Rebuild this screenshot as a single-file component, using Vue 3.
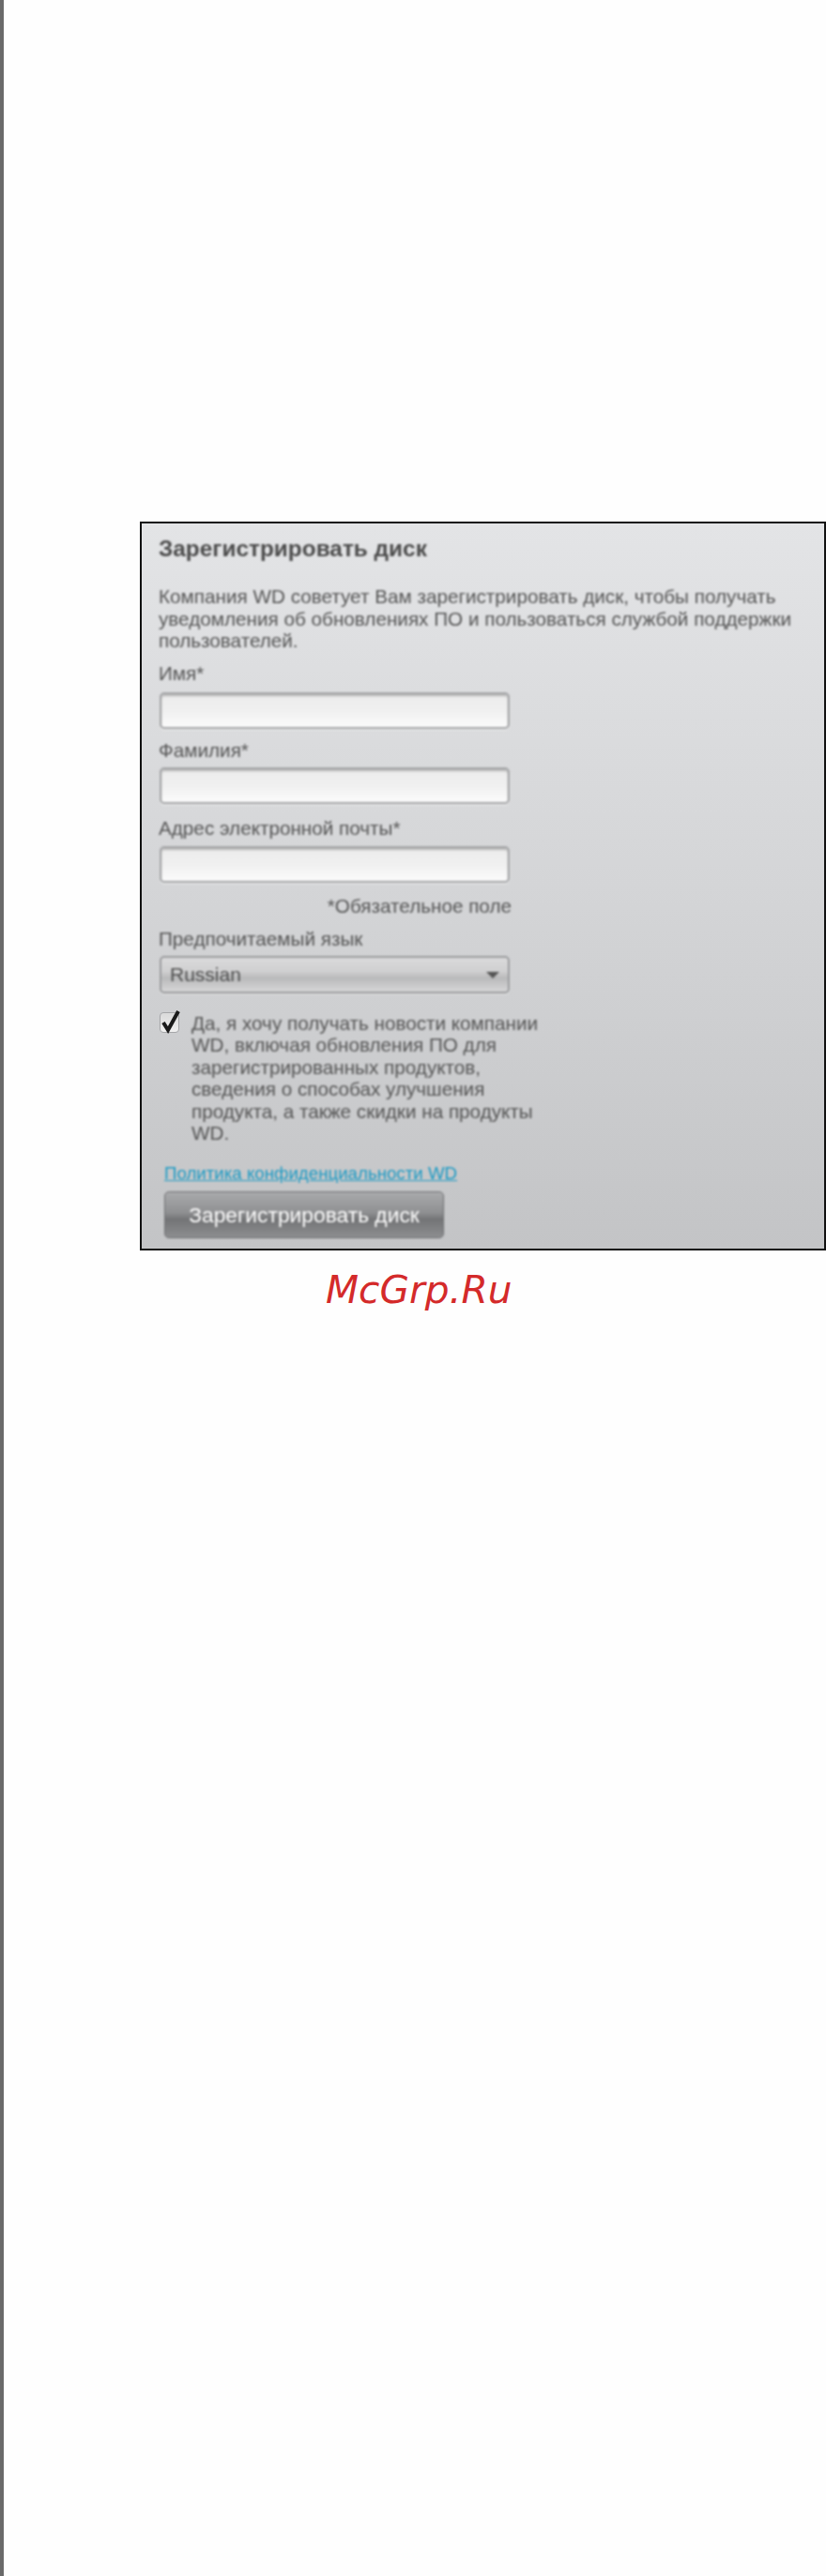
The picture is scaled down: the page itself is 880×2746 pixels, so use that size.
<script setup>
import { ref } from 'vue'

const firstName = ref('')
const lastName = ref('')
const email = ref('')
const language = ref('Russian')
const subscribe = ref(true)
</script>

<template>
  <div class="page">
    <form class="panel" @submit.prevent>
      <h2 class="title">Зарегистрировать диск</h2>
      <p class="intro">
        Компания WD советует Вам зарегистрировать диск, чтобы получать<br />
        уведомления об обновлениях ПО и пользоваться службой поддержки<br />
        пользователей.
      </p>

      <label class="label first">Имя*</label>
      <input v-model="firstName" class="input" type="text" />

      <label class="label second">Фамилия*</label>
      <input v-model="lastName" class="input tight" type="text" />

      <label class="label third">Адрес электронной почты*</label>
      <input v-model="email" class="input" type="text" />

      <div class="required">*Обязательное поле</div>

      <label class="label lang">Предпочитаемый язык</label>
      <div class="select-wrap">
        <select v-model="language" class="select">
          <option>Russian</option>
        </select>
        <span class="arrow"></span>
      </div>

      <label class="check-row">
        <span class="check-box" @click.prevent="subscribe = !subscribe">
          <svg v-if="subscribe" class="tick" viewBox="0 0 24 28" width="24" height="28">
            <path d="M4 15 L9 23 L20 3" fill="none" stroke="#1a1a1a" stroke-width="4" />
          </svg>
        </span>
        <span class="check-text">
          Да, я хочу получать новости компании<br />
          WD, включая обновления ПО для<br />
          зарегистрированных продуктов,<br />
          сведения о способах улучшения<br />
          продукта, а также скидки на продукты<br />
          WD.
        </span>
      </label>

      <a class="policy" href="#">Политика конфиденциальности WD</a>
      <button class="submit" type="submit">Зарегистрировать диск</button>
    </form>

    <div class="mark">McGrp.Ru</div>
  </div>
</template>

<style>
html, body {
  margin: 0;
  background: #fefefe;
}
</style>

<style scoped>
.page {
  box-sizing: border-box;
  width: 880px;
  height: 2746px;
  border-left: 4px solid #6a6a6a;
  padding: 556px 0 0 145px;
  font-family: "Liberation Sans", Arial, sans-serif;
  background: #fefefe;
}

.panel {
  box-sizing: border-box;
  width: 731px;
  height: 777px;
  border: 2px solid #111;
  padding: 15px 18px 0 18px;
  background: linear-gradient(180deg, #e3e4e6 0%, #d4d5d7 50%, #c3c4c6 100%);
  color: #555;
  display: flex;
  flex-direction: column;
  align-items: flex-start;
}

.title, .intro, .label, .required, .check-text, .policy, .submit, .select {
  filter: blur(1.2px);
}

.title {
  margin: 0;
  font-size: 24.4px;
  line-height: 24px;
  font-weight: bold;
  color: #4c4c4c;
}

.intro {
  margin: 27px 0 0;
  font-size: 20.7px;
  line-height: 23.5px;
  white-space: nowrap;
}

.label {
  display: block;
  font-size: 20.7px;
  line-height: 20px;
}
.label.first { margin-top: 13px; }
.label.second { margin-top: 13px; }
.label.third { margin-top: 16px; }
.label.lang { margin-top: 15px; }

.input {
  box-sizing: border-box;
  width: 373px;
  height: 39px;
  margin: 10px 0 0 1px;
  border: 2px solid #a2a3a5;
  border-radius: 5px;
  background: linear-gradient(180deg, #ececec 0%, #f0f0f0 50%, #fbfbfb 100%);
  box-shadow: 0 1px 2px #eeeeee, inset 0 2px 2px #b5b5b5;
  outline: none;
  filter: blur(1.2px);
}
.input.tight { margin-top: 8px; }
.label.third + .input { margin-top: 9px; }

.required {
  align-self: flex-start;
  width: 376px;
  margin-top: 15px;
  text-align: right;
  font-size: 20.7px;
  line-height: 20px;
}

.select-wrap {
  position: relative;
  width: 373px;
  height: 40px;
  margin: 8px 0 0 1px;
}

.select {
  appearance: none;
  box-sizing: border-box;
  width: 100%;
  height: 100%;
  padding: 0 0 0 9px;
  border: 2px solid #9a9b9d;
  border-radius: 5px;
  background: linear-gradient(180deg, #dadadb 0%, #d0d0d1 40%, #b9babb 60%, #d6d6d7 100%);
  box-shadow: 0 1px 2px #e4e4e4;
  color: #4e4e4e;
  font-family: inherit;
  font-size: 21px;
  outline: none;
}

.arrow {
  position: absolute;
  right: 11px;
  top: 17px;
  width: 0;
  height: 0;
  border-left: 7px solid transparent;
  border-right: 7px solid transparent;
  border-top: 7px solid #555;
  filter: blur(0.8px);
}

.check-row {
  display: flex;
  align-items: flex-start;
  gap: 13px;
  margin: 20px 0 0 1px;
}

.check-box {
  position: relative;
  flex: none;
  box-sizing: border-box;
  width: 21px;
  height: 22px;
  border: 1px solid #a5a6a8;
  border-radius: 4px;
  background: linear-gradient(180deg, #dadada, #f0f0f0);
  filter: blur(0.7px);
}

.tick {
  position: absolute;
  left: -1px;
  top: -5px;
}

.check-text {
  font-size: 20.7px;
  line-height: 23.6px;
  white-space: nowrap;
}

.policy {
  margin: 19px 0 0 6px;
  font-size: 18.7px;
  line-height: 24px;
  color: #1b9ac4;
  text-decoration: underline;
}

.submit {
  box-sizing: border-box;
  width: 298px;
  height: 50px;
  margin: 7px 0 0 6px;
  padding: 0;
  border: 1px solid #6e6f71;
  border-radius: 5px;
  background: linear-gradient(180deg, #a9aaac 0%, #8f9092 45%, #737476 60%, #8d8e90 100%);
  color: #fff;
  font-family: inherit;
  font-size: 22.8px;
}

.mark {
  margin: 20px 0 0 198px;
  width: 220px;
  font-family: "DejaVu Sans", sans-serif;
  font-style: italic;
  font-size: 40.7px;
  line-height: 44px;
  color: #d42a2a;
  white-space: nowrap;
}
</style>
